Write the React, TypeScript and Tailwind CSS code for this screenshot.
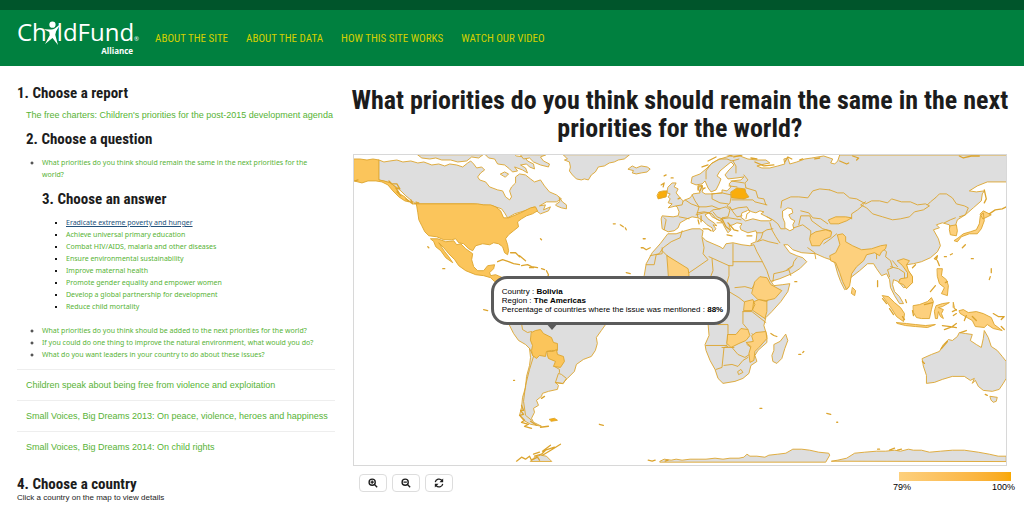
import { useState } from "react";

const NAV_LINKS = ["About the site", "About the data", "How this site works", "Watch our video"];

const ANSWERS = [
  "Eradicate extreme poverty and hunger",
  "Achieve universal primary education",
  "Combat HIV/AIDS, malaria and other diseases",
  "Ensure environmental sustainability",
  "Improve maternal health",
  "Promote gender equality and empower women",
  "Develop a global partnership for development",
  "Reduce child mortality",
];

const OTHER_QUESTIONS = [
  "What priorities do you think should be added to the next priorities for the world?",
  "If you could do one thing to improve the natural environment, what would you do?",
  "What do you want leaders in your country to do about these issues?",
];

const OTHER_REPORTS = [
  "Children speak about being free from violence and exploitation",
  "Small Voices, Big Dreams 2013: On peace, violence, heroes and happiness",
  "Small Voices, Big Dreams 2014: On child rights",
];

// Countries without data
const LAND = [
  // Canada
  "M378 159L383 161 389 160 396 159 402 161 410 160 417 162 423 161 431 164 438 163 444 165 449 163 456 164 462 166 467 162 470 160 473 163 476 167 481 166 484 169 480 172 477 176 479 179 485 181 489 186 497 189 502 190 505 196 509 199 511 196 509 190 511 186 515 182 515 176 519 173 525 174 530 178 534 181 540 179 544 185 549 191 556 194 561 198 556 201 546 201 539 205 545 204 543 209 550 206 548 210 540 213 536 210 534 206 527 209 514 213 507 217 504 212 501 208 492 205 480 204 472 203H415L411 200 405 195 400 190 394 185 386 181 378 179z",
  // Arctic islands
  "M417 154l4 3 8 1 6-1 6 2 9 0 7 2 9-1 5-4 7 1 4-3zM485 154l3 3 6 1 3 5 7 1 5 4 3 3 5-1-3-4 8 3 5 3-2-5-5-3 6-1 3 3 5 2-1-5-6-3-3-4-8-1-4-3z",
  "M500 173l4-2 4 2-3 3zM545 154l-5 2 3 4 6 3-1 3-8-2-7-3-4-4-6 1-3-4z",
  // Newfoundland
  "M559 197l3 4 4 3 0 4-5-1-5-2-1-1 4-3z",
  // Greenland and Iceland
  "M563 154l4 4-3 1 5 2 1 5-1 4 3 4 4 4 5 1 3-1 4 1 3-5 4-3 3-5 6-1 5-3 5-1 4-2 6-1 5-4z",
  "M628 168l4-3 4 2 5-2 6 1 3 2-3 3-6 1-5 1-4-1 1-2z",
  // South America
  "M505 315L508 323 513 333 518 340 525 344 529 348 530 357 529 365 526 376 525 387 522 397 521 407 519 415 523 420 530 424 541 426 533 422 531 418 534 412 533 408 538 405 536 400 541 396 542 393 548 391 557 389 558 385 555 382 562 383 567 378 574 371 576 364 583 359 591 356 595 350 597 343 596 337 601 330 606 323z",
  // Eurasia
  "M1007 154H840L838 160 835 163 831 162 833 158 824 155 812 157 805 158 797 161 790 163 788 157 784 158 785 163 778 165 770 167 762 167 757 165 765 163 770 162 766 159 757 159 748 158 740 155 730 155 720 158 712 162 706 168 700 173 692 176 691 182 696 184 702 183 705 180 708 187 711 191 716 189 719 183 721 178 717 175 720 170 726 165 731 161 734 164 729 169 725 174 728 178 737 177 744 176 741 179 732 180 729 183 731 186 727 190 722 189 722 192 712 193 705 193 702 191 703 188 702 184 698 187 700 192 693 193 690 197 685 199 681 202 671 202 677 206 679 211 678 215 673 216 662 215 661 218 662 228 668 231 674 230 678 227 680 222 687 218 692 216 698 217 703 220 707 224 712 227 713 231 716 228 713 224 717 225 714 222 708 218 705 214 709 212 712 216 718 219 722 221 725 227 728 232 731 229 729 225 733 224 737 222 742 223 740 226 741 229 748 232 756 230 757 233 756 241 751 243 753 248 760 260 767 272 770 281 780 278 792 273 800 268 807 261 803 257 797 255 790 252 784 244 788 244 793 249 802 252 816 253 825 257 831 259 835 262 838 273 841 281 845 289 849 287 851 277 860 270 868 263 874 263 877 268 882 275 887 273 890 279 891 287 895 295 900 303 904 303 900 296 895 291 893 284 894 279 899 281 904 287 908 286 913 282 913 276 908 269 907 264 914 263 922 261 931 257 938 251 941 245 939 238 934 229 940 227 937 224 943 222 950 224 951 229 953 234 957 232 956 225 958 219 966 214 974 207 982 200 983 193 985 190 977 191 970 190 978 185 988 181 1007 181z",
  // Great Britain
  "M668 186l4-4 4 0-2 4 4 2-2 4 4 5 3 3-1 4-6 1-8 2 4-4-4-1 2-4-2-2 2-3-3-1z",
  // Africa
  "M668 233L676 233 685 230 692 228 700 228 703 230 702 236 706 240 713 243 720 246 723 248 726 243 733 242 742 244 750 245 754 244 757 251 762 260 767 270 770 279 774 285 783 284 790 283 788 291 781 301 772 311 766 317 764 325 767 335 767 342 758 350 755 355 757 361 751 365 749 373 743 378 735 381 723 383 718 378 715 369 710 360 706 350 705 344 709 335 708 323 700 310 660 300 645 285 644 275 646 263 652 252 660 243z",
  // Madagascar
  "M786 334l2 6-3 8-3 10-5 5-4-2-1-6 2-5 0-6 6-3z",
  // Australia and Tasmania
  "M923 358L932 354 940 351 944 344 949 339 953 340 958 336 960 332 966 333 973 334 971 340 977 344 982 347 984 338 985 330 989 337 992 346 998 350 1003 356 1007 361V378L1004 383 1000 389 993 391 984 390 979 386 976 380 973 383 975 378 971 380 965 376 953 376 943 379 935 382 927 383 927 375 924 366z",
  "M991 396l7 1-1 4-3 1-2-2z",
  // Antarctica
  "M660 461l4-2 7 1 5-1 6 1 8-1 8 0 8 0 9-1 8 1 7-1 9 0 5-1 3-3 3 2 7 0 8 1 4-2 9-1 8-1 7-4 9 0 8 1 9 2 10 1 1 2-4 7H660z",
  "M832 461l6-1 9-2 8-5 10-1 12-1 9 0 9-1 6 1 8-2 5 1 8 0 8 2 11-1 12-1 12 0 14 2 11 2 9 2 8 0v5z",
  "M530 461l4-4 6-2 6 1 5 5z",
];

// Share of mentions, light to dark
const LIGHT = [
  // Mali, Ethiopia, Uganda, Kenya, Zambia, Mozambique
  "M667 255L688 268 689 275 678 281 669 281z",
  "M755 281L760 276 767 277 771 284 782 290 775 298 766 300 758 299 752 293z",
  "M745 301L753 299 755 304 752 310 744 310zM754 301L759 299 767 301 767 311 765 318 759 314 753 310z",
  "M728 334l8 0 5-6 7 1 2 6-4 5-7 3-8 4-4-4z",
  "M752 335l4-3 10-1 1 7-8 9-4 4-1 9-4 2-1-9 2-7-5-4 7-1z",
  // India and Nepal
  "M838 234l5-1 3 3 0 5 7 4 9 4 10-1 9-3 6-1-1 4-4 3-2 4-5-3-8 2-3 6-7 6-5 7-2 12-3 4-4-8-3-9-4-10-5-2-1-5 6-3 4-8z",
  "M811 234l5-3 10-2 6 2-1 5-7 3-4 6-8 0-2-6z",
  "M829 219l7-3 10 0 6 1-5 3-8 3-8 0z",
  // South-east Asia
  "M898 260l6-2 6 2-3 4 2 6 4 6 0 6-6 6-3-4-5-2 2-4 7-1 0-5-5-7z",
  "M853 287l3 3-1 5-3-2zM883 295l6 1 6 6 6 5 4 6-1 8-7-5-5-8-5-7z",
  "M914 305l6-1 8-3 4-4 2 4-2 8-2 9-8 0-5-1-3-5zM897 322l10 1 9 1 10 1 10-1-8 3-12-1-10-1-8-2z",
  "M937 305l6-2 7-1-7 4-4 1 5 2-2 4 2 5-3-2-2-5-1 7-2 0-1-7zM954 302l1 5 2 3-3-3zM960 310l4-1 5 3 8-1 7 2 8 4 3 7 8 6-9-2-6-4-3 3-9-1-3-6-7-4-5-3z",
  "M938 268l5 0-1 7 5 4 2 6-1 10-6-2 3-6-5-4-2-7z",
  // Japan and Korea
  "M951 225l6-1 1 6-1 5-6-1-1-5zM959 237l5-4 7-2 6-2 3-6 1-8 3-3 1 8-3 8-4 5-8 0-8 3-4 5-3-1zM981 213l3-3 8 4-8 4z",
];

const MID = [
  // Alaska
  "M353 158l6 0 7 1 6-1 6 1v20l5 1 7 2 5 5 4 6 5 3 4 5-4-1-6-4-6-6-5-6-6-3-6-1-8 0-6 2-8-2z",
  // Continental United States
  "M413 203h64l6 1 7 0 5 2 5 4 3 7 5 0 12-5 10-5 5-1 2 4-5 3-6 2-5 3-4 3 1 5-5 4-5 4-3 4 2 6 1 6-1 4-3-2-2-6-4-3-5-1-4 2-7-1-7 2-3 5-4-2-5-5-5-1-3-4-4 1-8 0-7-3-8-1-4-4-3-6-3-6-1-7-1-6-1-5 3 1z",
  // Mexico and Central America
  "M430 238l7 0 8 3 8-1 3 4 4-1 5 5 7 5-1 6 2 7 4 4 6 0 4-5 7-1-1 4-4 4 1 3 5-1 7 3 2 6-4 2-6-4-4-4-7-2-8-1-10-4-7-5-4-6-6-6-5-6-5-5 6 9 4 5 4 6-7-5-5-7-5-4-2-5z",
  // Bolivia and Paraguay
  "M531 332l4-2 5-1 3 4 8 4 2 5 4 1 0 7-6 0-5 1-1 5-6-1-3 3-4-3-1-5 1-5-2-5z",
  "M547 351l6 0 3-2 1 5 6 2 1 5-4 6-7-1 2-5-7-3-1-3z",
];

const DARK = [
  // Ireland and Belarus
  "M659 191l4-1 4 0-1 6-4 1-4 1-1-3z",
  "M731 191l6-4 8 1 1 4 3 4-5 2-12-1z",
  // Falklands
  "M549 419l5-1 3 2-6 1z",
];

const BORDERS = [
  // Europe
  "M706 178l0-8 5-7 8-5 8 0 5 2 7-2M733 160l3 5 0 7M744 174l4 5-3 3 1 5M731 180l13 2M729 185l8 1M731 193l0 4-1 5-3 3 5 4 6-2 9-1 3 5-3 2-1 5M712 193l10-1 9 2M712 193l0 5 8 4 8 1M685 199l6 4 8 3-2 7 1 4M692 194l3 6 4 6 7 0 6-1 7 3 7-2 4 3-2 7-6 1-2 3-4-2-4-5-3-1-5 0-8 2M697 212l7-1 5 1 4-3 7-1M713 211l4 5 5 2 0 4-5 0M722 218l7-1 12 2M730 206l3 5 4 5 5-1M746 187l10 3 2 7 6 1 2 6M732 199l14 0 7 0 2 2 12 3M679 216l10 2M664 217l2 2-2 10",
  // Central Asia
  "M830 189l8 3 6 0 6 5 7 1 9 5 6-3 8 0 8 2 4-4 10 3 9 0 7 3 8-1 4 2-6 4-9 2-5 5-9 2-8 1-10-3-10-3-6-6-6-3 5-3M852 218l0-5 6-4 6-5M830 189l-10-1-7 2-5 7-9-1-8 0-9 4-1 7M799 224l2-9 9 0 2 5 11 8 8 2M801 210l8 2 4 5 8 1 7 5M794 227l9-3 8 6 0 6M808 247l7 5 1 6M767 216l6 3 5 4 3 5 4 0M770 222l2 7 4 7 4 6",
  "M936 197l4-4 7 0 6 4 4 6 8 2 4 2-3 7-6 2M928 204l3-3 5-4M945 222l6-3 5-2",
  // Middle East
  "M757 232l5 0 5-3 6-1M757 241l6-2 6 2 9 2M763 232l-2 6-3 2M773 281l1-8 9-2 6-2 4-4M789 269l2 6M797 257l-3 4-1 4-6 4",
  // South-east Asia
  "M870 252l3-2 4 2 0 6M878 253l4-6 5 4-1 5 5 4 2 7-5 2 2 7M891 266l8 2 6 4 0 6-5 1M893 260l5 6M837 233l-6 5-7 5",
  // Africa
  "M682 230l-2 7-9 4-8 6-4 6-9 2M662 247l0 6-6 1-2 10-8 0M662 250l5 5M702 237l2 10-1 6 5 6-13 9-6 4-22-17M733 243l0 18 0 4-4 0-20-9M733 261l29 0M712 258l1 12-4 10M729 265l0 10-3 10 3 6 10 6 5 4M735 287l10-1 7 2 3-5M726 285l-7 10M743 311l9 0 14 11M743 311l0 12 5 6M767 301l3-4 10-8M706 345l21 0 1-12 0-9-10 0-3-3M728 346l-4 1-2 20-6 2M722 347l12 0M724 365l8-1 6 2 5-6 5-3M732 347l6 7 7 3 6-4 0-6-4-3M752 333l4 4 0 6M738 371l3-2 2 3-4 2z",
  // South America
  "M521 323l1 6 5 3 4-1M529 348l4 8-4 13-4 16-2 16 2 14 6 5M555 382l3-9 3 1 5 4-3 5zM554 366l5 3 0 3M533 356l2 0",
  // Papua
  "M983 313l0 13",
];

// Small islands and broken coastlines
const ISLES =
  "M354 180l3-1M388 180l3 3 5 0 3 5-4-1 3 5M396 191l4 4M405 198l7 5-2-4M427 246l1 1M442 268l2 0M497 261l5-2 6 2 5 2 6 1M521 265l6-1 4 2 6 1M510 252l5 0 4 4M519 255l6 5M529 267l4 0M541 268l3 1M546 270l2 4-1 3M540 238l1 1M613 223l2 0M620 224l3 2M625 227l1 2M643 238l2 0M641 247l2 0 3 2 4-2M626 272l4 1M664 175l2-1M671 177l2 0M680 197l-2 1M661 184l3-2-1 4M698 189l0-4 4 0-2 5M703 188l2-1M701 215l0 6M698 219l1 4M703 228l5 0 3 2M722 218l4 8 4 3M728 222l6 7 4 1M727 234l5 1M747 235l5 0M708 164l-6 2M716 156l-8 4M725 153l7 2M734 156l8-2M755 161l9 4 10-1M751 157l6 1M785 161l3-5 4 2M800 159l3-1M815 158l5-1M840 160l7 3 2-1M853 155l6 2-2 2M960 155l4 2 8-2 8 0M985 189l2 9-2 4M990 213l6-4 7-1 4-2M945 256l2 0M951 254l2-1M938 255l-1 4-2-1zM916 264l-3 3M963 247l3-3M972 258l2 0M992 268l0 4M991 276l-1 3M878 280l0 6M906 299l1 3M940 265l-2-5M948 281l-2 1M936 285l-5 6M925 304l8-2M943 325l8 1 6 1M945 329l8-3 4-3M953 311l4-2M954 315l3-2M965 320l2-5M973 316l4 4M994 313l5 3 6 0-3 3M1002 326l3 3M903 316l2 3M894 314l-4-6M887 303l-4-5M913 310l1 5M540 427l8-1M521 405l2 5-3 0 3 4-4 1 5 5-3 2 7 2-4 2 7 2M530 421l6 4M541 398l3-2M599 424l4 1M554 447l-9 3-4 4-7 2M560 444l-8 5-10 6M550 445l-8 6M516 461l5-4 4 2 4-3 2 4 6-3 2 3M533 454l6-2M655 460l-3 1-4-1M665 461l3-1M771 333l3 2 3 1M799 354l2 0M803 352l1-1M827 413l4 1M837 422l1 0M760 408l2 0M986 394l2 1M925 363l-2-2M942 348l6-7M961 332l6-2M483 309l4 1M513 380l1 0M795 281l2 0M878 449l2 0M890 450l5-2M898 450l4-1";

function Logo() {
  return (
    <a href="#home" aria-label="ChildFund Alliance" className="flex flex-col font-['Open_Sans','Noto_Sans',sans-serif] text-white">
      <span className="flex items-baseline text-2xl leading-6 font-normal">
        Ch
        <svg viewBox="0 0 18 26" className="-mx-1 h-6 w-[18px] self-end" fill="currentColor" aria-hidden="true">
          <circle cx="9.5" cy="4" r="3.4" />
          <path d="M0 9L7 9.200Q10 9.500 12 8L18 3.500L13.500 11L12.500 15L15.500 26L9.500 18.500L1.500 25L6.500 15.500L6 11.800Z" />
        </svg>
        ldFund
        <span className="text-[6px] leading-3">®</span>
      </span>
      <span className="pr-1.5 text-right text-[8px] leading-3 font-bold">Alliance</span>
    </a>
  );
}

function Heading({ children }: { children: string }) {
  return (
    <h2 className="font-['Roboto_Condensed','Liberation_Sans_Narrow',sans-serif] text-[15px] leading-5 font-bold text-[#1c1c1c]">
      {children}
    </h2>
  );
}

function WorldMap({ zoom }: { zoom: number }) {
  return (
    <svg viewBox="353 154 654 311" className="block w-full" role="img" aria-label="World map">
      <g
        transform={`translate(680 310) scale(${zoom}) translate(-680 -310)`}
        stroke="#dca42d"
        strokeWidth="0.9"
        strokeLinejoin="round"
        strokeLinecap="round"
      >
        <g fill="#dedede">{LAND.map((d) => <path key={d} d={d} />)}</g>
        {/* Inland seas */}
        <g fill="#fff">
          <path d="M741 216l1-4 5-2 1-1 4 2 4 1 4-2 4 1-3 2 8 4 3 2-2 1-9 0-8-2-7 2z" />
          <path d="M783 210l5-3 4 1 1 4-4 2 2 4 4 2-2 4 1 4-4 2-5-3 0-5-2-5z" />
        </g>
        <g fill="none">{BORDERS.map((d) => <path key={d} d={d} />)}</g>
        <g fill="#fdd07d">{LIGHT.map((d) => <path key={d} d={d} />)}</g>
        <g fill="#fbc55b">{MID.map((d) => <path key={d} d={d} />)}</g>
        <g fill="#f9ad0c">{DARK.map((d) => <path key={d} d={d} />)}</g>
        <path d={ISLES} fill="none" strokeWidth="1.3" />
      </g>
    </svg>
  );
}

function Tooltip() {
  return (
    <div className="absolute top-[39%] left-[21%] rounded-2xl border-3 border-[#5b5b5b] bg-white py-2 pr-1 pl-2 text-[8px] leading-[9px] whitespace-nowrap text-black">
      <p>Country : <b>Bolivia</b></p>
      <p>Region : <b>The Americas</b></p>
      <p>Percentage of countries where the issue was mentioned : <b>88%</b></p>
      <svg viewBox="0 0 14 8" className="absolute top-full left-[22%] h-2 w-3.5" aria-hidden="true">
        <path d="M0 0H14L7 8Z" fill="#5b5b5b" />
      </svg>
    </div>
  );
}

const toolButton =
  "flex h-[18px] w-7 items-center justify-center rounded-sm border border-[#dddddd] bg-white text-[#1c1c1c]";

export default function App() {
  const [answer, setAnswer] = useState(ANSWERS[0]);
  const [zoom, setZoom] = useState(1);

  return (
    <div className="bg-white font-['Liberation_Sans',sans-serif] text-[#1c1c1c]">
      <header className="border-t-10 border-[#00552b] bg-[#00803f]">
        <div className="flex h-14 items-center gap-4 px-[17px]">
          <Logo />
          <nav className="flex gap-[18px] pt-0.5 font-['Roboto_Condensed','Liberation_Sans_Narrow',sans-serif] text-[11px] text-[#d3d000] uppercase">
            {NAV_LINKS.map((label) => (
              <a key={label} href="#nav">{label}</a>
            ))}
          </nav>
        </div>
      </header>

      <main className="grid grid-cols-[34fr_70fr] gap-[18px] px-[17px] pt-[17px]">
        <aside className="text-[9px] leading-3 text-[#57b335]">
          <Heading>1. Choose a report</Heading>
          <div className="pl-[9px]">
            <a href="#report" className="block pt-1.5 pb-2">
              The free charters: Children's priorities for the post-2015 development agenda
            </a>
            <Heading>2. Choose a question</Heading>
            <ul className="list-[circle] pt-2 pr-2 pl-4 font-['Noto_Sans','Open_Sans',sans-serif] text-[7px] marker:text-[#1c1c1c]">
              <li>
                <a href="#question">What priorities do you think should remain the same in the next priorities for the world?</a>
                <div className="pt-2">
                  <Heading>3. Choose an answer</Heading>
                </div>
                <ul className="list-[square] pt-2 pb-3 pl-6">
                  {ANSWERS.map((item) => (
                    <li key={item}>
                      <a
                        href="#answer"
                        onClick={() => setAnswer(item)}
                        className={item === answer ? "text-[#23527c] underline" : ""}
                      >
                        {item}
                      </a>
                    </li>
                  ))}
                </ul>
              </li>
              {OTHER_QUESTIONS.map((item) => (
                <li key={item}><a href="#question">{item}</a></li>
              ))}
            </ul>
          </div>
          <ul className="pt-2">
            {OTHER_REPORTS.map((item) => (
              <li key={item} className="border-t border-[#eeeeee] py-[9px] pl-[9px]">
                <a href="#report">{item}</a>
              </li>
            ))}
          </ul>
          <div className="pt-3">
            <Heading>4. Choose a country</Heading>
            <p className="text-[8px] leading-2 text-[#1c1c1c]">Click a country on the map to view details</p>
          </div>
        </aside>

        <section>
          <h1 className="-mx-2 pt-[3px] text-center font-['Roboto_Condensed','Liberation_Sans_Narrow',sans-serif] text-[26px] leading-7 font-bold">
            What priorities do you think should remain the same in the next priorities for the world?
          </h1>
          <div className="relative mt-3 overflow-hidden border border-[#d8d8d8]">
            <WorldMap zoom={zoom} />
            <Tooltip />
          </div>
          <div className="flex items-start justify-between pt-2 pl-1.5">
            <div className="flex gap-[5px]">
              <button type="button" aria-label="Zoom in" className={toolButton} onClick={() => setZoom(zoom * 1.25)}>
                <svg viewBox="0 0 12 12" className="size-2.5" fill="none" stroke="currentColor" strokeWidth="1.6">
                  <circle cx="5" cy="5" r="3.7" />
                  <path d="M7.800 7.800L11 11M3 5H7M5 3V7" />
                </svg>
              </button>
              <button type="button" aria-label="Zoom out" className={toolButton} onClick={() => setZoom(Math.max(1, zoom / 1.25))}>
                <svg viewBox="0 0 12 12" className="size-2.5" fill="none" stroke="currentColor" strokeWidth="1.6">
                  <circle cx="5" cy="5" r="3.7" />
                  <path d="M7.800 7.800L11 11M3 5H7" />
                </svg>
              </button>
              <button type="button" aria-label="Reset" className={toolButton} onClick={() => setZoom(1)}>
                <svg viewBox="0 0 12 12" className="size-2.5" fill="none" stroke="currentColor" strokeWidth="1.5">
                  <path d="M1.500 5A4.500 4.500 0 0 1 9.500 3M10.500 7A4.500 4.500 0 0 1 2.500 9" />
                  <path d="M11 0.500V5H6.500ZM1 11.500V7H5.500Z" fill="currentColor" stroke="none" />
                </svg>
              </button>
            </div>
            <div className="-mt-0.5 -mr-1 w-28">
              <div className="h-[9px] bg-linear-to-r from-[#fdd07d] to-[#f9a800]" />
              <div className="-mr-1 -ml-1.5 flex justify-between text-[9px] leading-3 text-black">
                <span>79%</span>
                <span>100%</span>
              </div>
            </div>
          </div>
        </section>
      </main>
    </div>
  );
}
